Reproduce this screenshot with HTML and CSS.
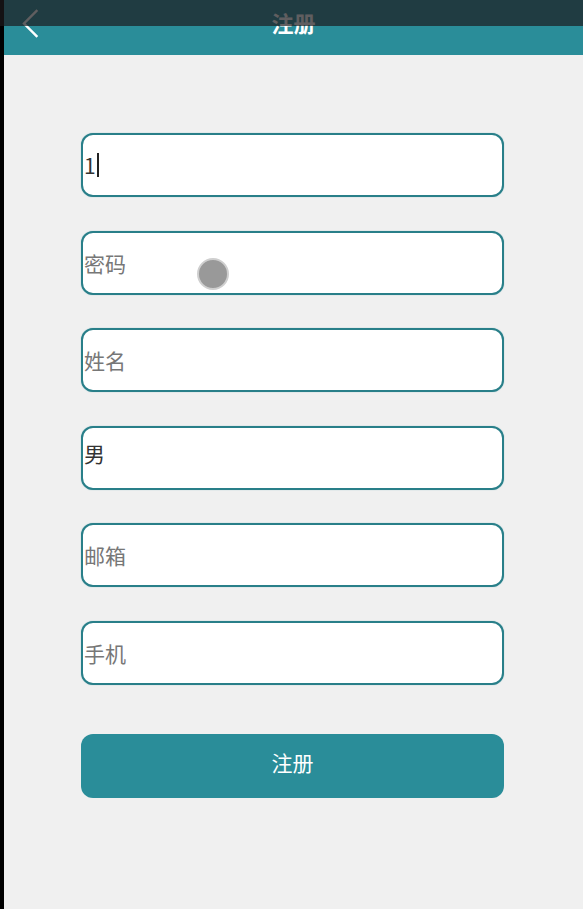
FILE: index.html
```html
<!DOCTYPE html>
<html lang="zh">
<head>
<meta charset="utf-8">
<title>注册</title>
<link rel="stylesheet" href="styles.css">
</head>
<body>
<div class="statusbar"></div>
<div class="app">
  <header class="header">
    <svg class="back" width="20" height="30" viewBox="0 0 20 30"><polyline points="15.5,2 3,14.5 15.5,27" fill="none" stroke="#ffffff" stroke-width="2.4" stroke-linecap="square"/></svg>
    <h1 class="title">注册</h1>
  </header>
  <form class="form">
    <div class="field"><span class="value">1</span><span class="caret"></span></div>
    <div class="field"><span class="placeholder">密码</span></div>
    <div class="field"><span class="placeholder">姓名</span></div>
    <div class="field field-select"><span class="value">男</span></div>
    <div class="field"><span class="placeholder">邮箱</span></div>
    <div class="field"><span class="placeholder">手机</span></div>
    <div class="submit">注册</div>
  </form>
</div>
<div class="touch"></div>
</body>
</html>
```

FILE: styles.css
```css
html, body {
  margin: 0;
  padding: 0;
  height: 100%;
}
body {
  background: #000;
  font-family: "Noto Sans CJK SC", "Noto Sans", sans-serif;
}
.app {
  margin-left: 4px;
  min-height: 909px;
  background: #f0f0f0;
}
.statusbar {
  position: fixed;
  top: 0;
  left: 0;
  right: 0;
  height: 26px;
  background: rgba(29, 25, 29, 0.7);
  z-index: 5;
}
.header {
  position: relative;
  height: 55px;
  background: #2a8d99;
  display: flex;
  align-items: center;
  justify-content: center;
  box-sizing: border-box;
  padding-bottom: 11px;
}
.back {
  position: absolute;
  left: 17px;
  top: 9px;
}
.title {
  margin: 0;
  color: #ffffff;
  font-size: 22px;
  font-weight: 700;
  line-height: 24px;
}
.form {
  display: flex;
  flex-direction: column;
  gap: 33.6px;
  width: 423px;
  margin-left: 77px;
  padding-top: 78px;
}
.field {
  height: 64px;
  box-sizing: border-box;
  border: 2px solid #297f89;
  border-radius: 12px;
  background: #ffffff;
  display: flex;
  align-items: center;
  padding-left: 1px;
  font-size: 21px;
  line-height: 24px;
  box-shadow: 0 0 1px rgba(42, 141, 153, 0.6);
}
.field-select {
  align-items: flex-start;
  padding-top: 13px;
}
.placeholder {
  color: #777777;
}
.value {
  color: #333333;
}
.caret {
  display: inline-block;
  width: 2px;
  height: 24px;
  background: #222;
  margin-left: 1px;
}
.submit {
  margin-top: 15.4px;
  height: 64px;
  border-radius: 12px;
  background: #2a8d99;
  color: #ffffff;
  font-size: 21px;
  display: flex;
  align-items: center;
  justify-content: center;
  padding-bottom: 7px;
  box-sizing: border-box;
}
.touch {
  position: absolute;
  left: 197px;
  top: 258px;
  width: 28px;
  height: 28px;
  border-radius: 50%;
  background: #999999;
  border: 2px solid #cfcfcf;
}
```
